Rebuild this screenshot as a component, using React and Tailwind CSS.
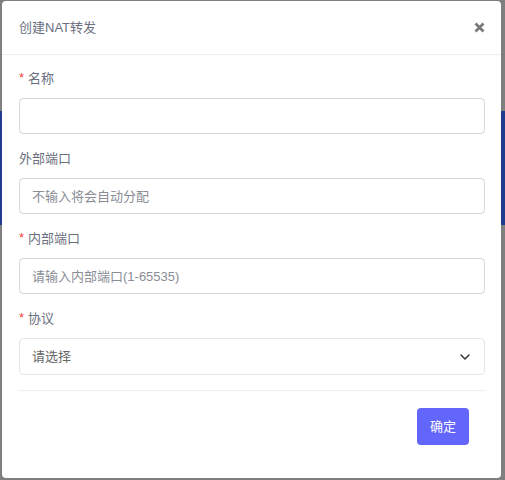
import { ChevronDown } from "lucide-react";

const font = { fontFamily: '"Liberation Sans", "Noto Sans CJK SC", sans-serif' };

function Field({ label, required, children }) {
  return (
    <div className="mb-[15px]">
      <div className="flex h-5 items-center text-[13px] text-[#6b6f80] mb-[9px]">
        {required && <span className="text-[#f04545] mr-1 mt-[-2px]">*</span>}
        {label}
      </div>
      {children}
    </div>
  );
}

function Input({ placeholder }) {
  return (
    <input
      type="text"
      placeholder={placeholder}
      className="w-full h-9 rounded border border-[#d4d7de] px-3 text-[13px] text-[#555] placeholder:text-[#8a8d96] outline-none"
    />
  );
}

export default function App() {
  return (
    <div className="relative w-[505px] h-[480px] bg-[#7f7f7f] overflow-hidden" style={font}>
      {/* page behind the overlay */}
      <div className="pt-[111px]">
        <div className="h-[114px] bg-[#213b8e]" />
      </div>

      {/* Dialog */}
      <div className="absolute left-[2px] top-[1px] w-[499px] h-[477px] bg-white rounded flex flex-col">
        <div className="h-[54px] flex items-center justify-between pl-[17px] pr-[16px] border-b border-[#edeef3]">
          <h3 className="text-[13px] text-[#6b6f80]">创建NAT转发</h3>
          <button type="button" className="text-[#7a7a7a]">
            <svg width="11" height="11" viewBox="0 0 11 11">
              <path d="M1.5 1.5L9.5 9.5M9.5 1.5L1.5 9.5" stroke="currentColor" strokeWidth="2.8" />
            </svg>
          </button>
        </div>

        <div className="pl-[17px] pr-[16px] pt-[14px]">
          <Field label="名称" required>
            <Input placeholder="" />
          </Field>
          <Field label="外部端口">
            <Input placeholder="不输入将会自动分配" />
          </Field>
          <Field label="内部端口" required>
            <Input placeholder="请输入内部端口(1-65535)" />
          </Field>
          <Field label="协议" required>
            <div className="flex h-[37px] items-center justify-between rounded border border-[#e3e5ea] pl-3 pr-[11px] text-[13px] text-[#666]">
              <span>请选择</span>
              <ChevronDown size={16} strokeWidth={2.2} className="text-[#333]" />
            </div>
          </Field>

          <div className="border-t border-[#eceef2] mt-[3px]" />

          <div className="flex justify-end pt-[17px] pr-4">
            <button
              type="button"
              className="w-[52px] h-[37px] rounded bg-[#6366fa] text-white text-[13px]"
            >
              确定
            </button>
          </div>
        </div>
      </div>
    </div>
  );
}
